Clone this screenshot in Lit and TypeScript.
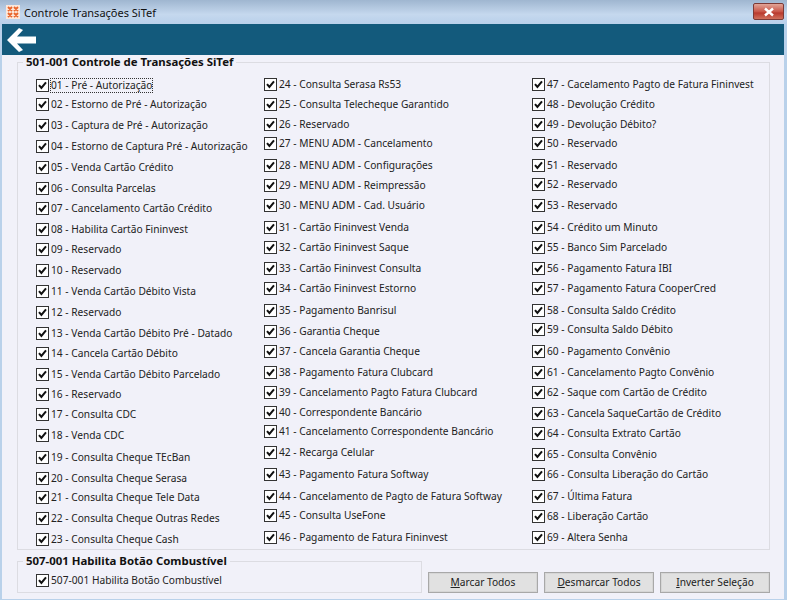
import { LitElement, html, css, svg } from "lit";
import { customElement } from "lit/decorators.js";

type Row = [string, number];

const col1: Row[] = [
  ["01 - Pré - Autorização", 85], ["02 - Estorno de Pré - Autorização", 104], ["03 - Captura de Pré - Autorização", 125],
  ["04 - Estorno de Captura Pré - Autorização", 146], ["05 - Venda Cartão Crédito", 167], ["06 - Consulta Parcelas", 188],
  ["07 - Cancelamento Cartão Crédito", 208], ["08 - Habilita Cartão Fininvest", 229], ["09 - Reservado", 249],
  ["10 - Reservado", 270], ["11 - Venda Cartão Débito Vista", 291], ["12 - Reservado", 312],
  ["13 - Venda Cartão Débito Pré - Datado", 333], ["14 - Cancela Cartão Débito", 353], ["15 - Venda Cartão Débito Parcelado", 374],
  ["16 - Reservado", 394], ["17 - Consulta CDC", 414], ["18 - Venda CDC", 435], ["19 - Consulta Cheque TEcBan", 457],
  ["20 - Consulta Cheque Serasa", 478], ["21 - Consulta Cheque Tele Data", 497], ["22 - Consulta Cheque Outras Redes", 518],
  ["23 - Consulta Cheque Cash", 539],
];
const col2: Row[] = [
  ["24 - Consulta Serasa Rs53", 84], ["25 - Consulta Telecheque Garantido", 104], ["26 - Reservado", 124],
  ["27 - MENU ADM - Cancelamento", 143], ["28 - MENU ADM - Configurações", 165], ["29 - MENU ADM - Reimpressão", 185],
  ["30 - MENU ADM - Cad. Usuário", 205], ["31 - Cartão Fininvest Venda", 227], ["32 - Cartão Fininvest Saque", 247],
  ["33 - Cartão Fininvest Consulta", 268], ["34 - Cartão Fininvest Estorno", 288], ["35 - Pagamento Banrisul", 310],
  ["36 - Garantia Cheque", 331], ["37 - Cancela Garantia Cheque", 351], ["38 - Pagamento Fatura Clubcard", 372],
  ["39 - Cancelamento Pagto Fatura Clubcard", 392], ["40 - Correspondente Bancário", 412],
  ["41 - Cancelamento Correspondente Bancário", 431], ["42 - Recarga Celular", 452], ["43 - Pagamento Fatura Softway", 474],
  ["44 - Cancelamento de Pagto de Fatura Softway", 496], ["45 - Consulta UseFone", 515], ["46 - Pagamento de Fatura Fininvest", 537],
];
const col3: Row[] = [
  ["47 - Cacelamento Pagto de Fatura Fininvest", 84], ["48 - Devolução Crédito", 104], ["49 - Devolução Débito?", 124],
  ["50 - Reservado", 143], ["51 - Reservado", 165], ["52 - Reservado", 184], ["53 - Reservado", 205],
  ["54 - Crédito um Minuto", 227], ["55 - Banco Sim Parcelado", 247], ["56 - Pagamento Fatura IBI", 268],
  ["57 - Pagamento Fatura CooperCred", 288], ["58 - Consulta Saldo Crédito", 310], ["59 - Consulta Saldo Débito", 329],
  ["60 - Pagamento Convênio", 351], ["61 - Cancelamento Pagto Convênio", 372], ["62 - Saque com Cartão de Crédito", 392],
  ["63 - Cancela SaqueCartão de Crédito", 413], ["64 - Consulta Extrato Cartão", 433], ["65 - Consulta Convênio", 454],
  ["66 - Consulta Liberação do Cartão", 474], ["67 - Última Fatura", 496], ["68 - Liberação Cartão", 516], ["69 - Altera Senha", 537],
];

const checkBox = svg`<svg class="cb" viewBox="0 0 13 13" width="13" height="13">
  <rect x="0.5" y="0.5" width="12" height="12" fill="#fff" stroke="#333"/>
  <path d="M3 6.2 L5.4 9 L10 3.4" fill="none" stroke="#111" stroke-width="2"/>
</svg>`;

@customElement("app-root")
export class AppRoot extends LitElement {
  static styles = css`
    :host { display: block; width: 787px; height: 600px; overflow: hidden; font-family: "Noto Sans", "DejaVu Sans", sans-serif; font-size: 10.2px; color: #222; }
    .window { width: 787px; height: 600px; box-sizing: border-box; display: flex; flex-direction: column; background: #b9d1ea; padding: 0 3px 1px 2px; }
    .title { height: 24px; flex: none; margin: 0 -3px 0 -2px; padding: 0 3px 0 6px; display: flex; align-items: center; gap: 4px; font-size: 11px; color: #111;
      background: linear-gradient(#9fb6d0, #c5d8ee 60%, #b9d0ea); }
    .ticon { width: 14px; height: 14px; flex: none; }
    .ttext { flex: 1; }
    .close { width: 31px; height: 17px; margin-top: -1px; border: 1px solid #7c3a36; border-radius: 2px; box-sizing: border-box; display: flex; align-items: center; justify-content: center;
      background: linear-gradient(#e2a598, #c9584a 50%, #b93a2e 60%, #d0705c); }
    .bar { height: 31px; flex: none; background: #135a7c; display: flex; align-items: center; padding-left: 5px; }
    .content { flex: 1; background: #f1f1f9; padding: 7px 15px 0 15px; display: flex; flex-direction: column; min-height: 0; position: relative; }
    .group { border: 1px solid #dcdce2; position: relative; box-sizing: border-box; }
    .group > h2 { position: absolute; top: -8px; left: 5px; margin: 0; padding: 0 3px; background: #f1f1f9; font: bold 11.4px "Noto Sans", sans-serif; line-height: 14px; color: #111; white-space: nowrap; }
    .main { height: 488px; display: flex; width: 753px; }
    .col { display: flex; flex-direction: column; flex: none; }
    .c1 { width: 221px; margin-left: 18px; }
    .c2 { width: 268px; margin-left: 7px; }
    .c3 { width: 220px; }
    .rowitem { display: flex; align-items: flex-start; white-space: nowrap; }
    .inner { display: flex; align-items: center; gap: 2px; height: 14px; }
    .cb { flex: none; display: block; }
    .focus { outline: 1px dotted #333; line-height: 13px; }
    .bottom { display: flex; margin-top: 11px; height: 32px; gap: 6px; }
    .sub { width: 405px; height: 32px; padding: 11px 0 0 18px; flex: none; }
    .buttons { display: flex; gap: 6px; align-items: flex-end; height: 32px; }
    button { width: 110px; height: 21px; padding: 0 0 2px; box-sizing: border-box; border: 1px solid #a8a8a8; box-shadow: inset 0 0 0 1px #d6d6d6; background: #e1e1e1; font: inherit; color: #222; }
    u { text-decoration: underline; }
  `;

  private renderCol(rows: Row[], cls: string) {
    return html`<div class="col ${cls}" style="padding-top:${rows[0][1] - 70}px">
      ${rows.map((r, i) => {
        const next = i + 1 < rows.length ? rows[i + 1][1] - r[1] : 14;
        return html`<div class="rowitem" style="height:${next}px"><div class="inner">${checkBox}<span class=${r[0].startsWith("01 ") ? "focus" : ""}>${r[0]}</span></div></div>`;
      })}
    </div>`;
  }

  render() {
    return html`<div class="window">
      <div class="title">
        <svg class="ticon" viewBox="0 0 14 14"><rect width="14" height="14" fill="#fbe7da"/><path d="M2 2 L6 6 M6 2 L2 6 M8 2 L12 6 M12 2 L8 6 M2 8 L6 12 M6 8 L2 12 M8 8 L12 12 M12 8 L8 12" stroke="#e8642a" stroke-width="1.8"/></svg>
        <span class="ttext">Controle Transações SiTef</span>
        <div class="close"><svg width="14" height="10" viewBox="0 0 14 10"><path d="M3 1.5 L11 8.5 M11 1.5 L3 8.5" stroke="#fff" stroke-width="2.4"/></svg></div>
      </div>
      <div class="bar">
        <svg width="30" height="26" viewBox="0 0 30 26"><path d="M0 13 L12 1 L16 3 L10 9.5 L29 9.5 L29 16.5 L10 16.5 L16 23 L12 25 Z" fill="#fff"/></svg>
      </div>
      <div class="content">
        <div class="group main">
          <h2>501-001 Controle de Transações SiTef</h2>
          ${this.renderCol(col1, "c1")}
          ${this.renderCol(col2, "c2")}
          ${this.renderCol(col3, "c3")}
        </div>
        <div class="bottom">
          <div class="group sub">
            <h2>507-001 Habilita Botão Combustível</h2>
            <div class="inner">${checkBox}<span>507-001 Habilita Botão Combustível</span></div>
          </div>
          <div class="buttons">
            <button><u>M</u>arcar Todos</button>
            <button><u>D</u>esmarcar Todos</button>
            <button><u>I</u>nverter Seleção</button>
          </div>
        </div>
      </div>
    </div>`;
  }
}
